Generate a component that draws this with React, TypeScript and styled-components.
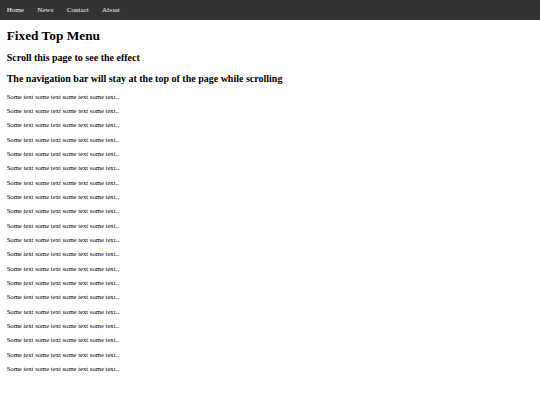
import React from 'react';
import styled, { createGlobalStyle } from 'styled-components';

// page is drawn at ~0.417 of the usual desktop size
const GlobalStyle = createGlobalStyle`
    html, body {
        margin: 0;
        padding: 0;
        background: #ffffff;
        overflow: hidden;
    }
    body {
        font-family: "Liberation Serif", "Times New Roman", serif;
        color: #000000;
    }
`;

const NavBar = styled.nav`
    position: sticky;
    top: 0;
    display: flex;
    align-items: center;
    width: 100%;
    background-color: #333333;
`;

const NavLink = styled.a`
    display: block;
    padding: 5.84px 6.67px;
    color: #f2f2f2;
    font-size: 7.09px;
    line-height: 1.15;
    text-align: center;
    text-decoration: none;
    cursor: pointer;
`;

const Main = styled.main`
    padding: 0 6.67px;
`;

const Title = styled.h1`
    margin: 8.3px 0 8.94px;
    font-size: 13.34px;
    line-height: 1.15;
    font-weight: bold;
`;

const SubTitle = styled.h2`
    margin: 8.94px 0 8.31px;
    font-size: 10px;
    line-height: 1.15;
    font-weight: bold;
`;

const Paragraph = styled.p`
    margin: 6.67px 0;
    font-size: 6.67px;
    line-height: 1.15;
`;

const links = ['Home', 'News', 'Contact', 'About'];

const App: React.FC = () => {
    const lines = Array.from({ length: 20 }, (_, i) => i);

    return (
        <>
            <GlobalStyle />
            <NavBar>
                {links.map((l) => (
                    <NavLink key={l} href={`#${l.toLowerCase()}`}>{l}</NavLink>
                ))}
            </NavBar>
            <Main>
                <Title>Fixed Top Menu</Title>
                <SubTitle>Scroll this page to see the effect</SubTitle>
                <SubTitle>The navigation bar will stay at the top of the page while scrolling</SubTitle>
                {lines.map((i) => (
                    <Paragraph key={i}>Some text some text some text some text..</Paragraph>
                ))}
            </Main>
        </>
    );
};

export default App;
